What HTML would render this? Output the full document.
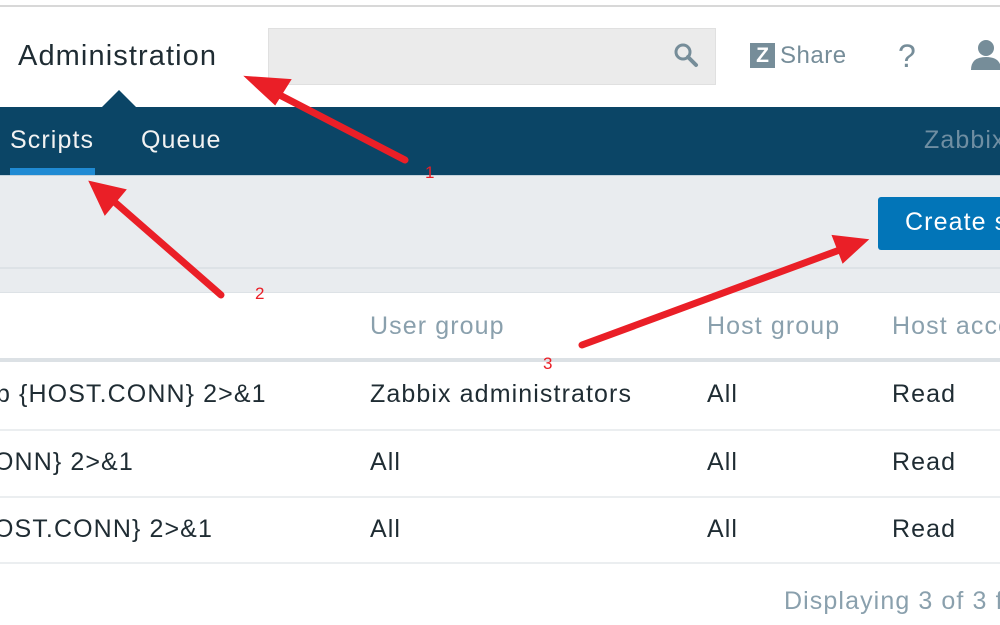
<!DOCTYPE html>
<html><head><style>
body{margin:0;width:1000px;height:625px;overflow:hidden;background:#fff;font-family:"Liberation Sans",sans-serif;position:relative;letter-spacing:1.1px}
.a{position:absolute}
</style></head><body>
<div class="a" style="left:0;top:0;width:1000px;height:5px;background:#fff;border-bottom:2px solid #d8d8d8"></div>
<div class="a" style="left:18px;top:40px;font-size:29px;color:#1f2c33">Administration</div>
<div class="a" style="left:268px;top:28px;width:446px;height:55px;background:#ebebeb;border:1px solid #e0e0e0"></div>
<svg class="a" style="left:672px;top:40px" width="30" height="30" viewBox="0 0 30 30"><circle cx="11" cy="12" r="7" fill="none" stroke="#768d99" stroke-width="3"/><line x1="16" y1="17" x2="24" y2="25" stroke="#768d99" stroke-width="4" stroke-linecap="round"/></svg>
<div class="a" style="left:750px;top:43px;width:25px;height:25px;background:#768d99;color:#fff;font-weight:bold;font-size:21px;text-align:center;line-height:25px;letter-spacing:0">Z</div>
<div class="a" style="left:780px;top:42px;font-size:24px;color:#768d99;letter-spacing:0.5px">Share</div>
<div class="a" style="left:898px;top:38px;font-size:32px;color:#768d99">?</div>
<svg class="a" style="left:968px;top:38px" width="32" height="34"><circle cx="18" cy="10" r="8" fill="#768d99"/><path d="M3 32 Q3 19 18 19 Q33 19 33 32Z" fill="#768d99"/></svg>
<div class="a" style="left:0;top:107px;width:1000px;height:68px;background:#0b4566"></div>
<div class="a" style="left:102px;top:90px;width:0;height:0;border-left:17px solid transparent;border-right:17px solid transparent;border-bottom:17px solid #0b4566"></div>
<div class="a" style="left:10px;top:126px;font-size:25px;color:#f2f2f2">Scripts</div>
<div class="a" style="left:141px;top:126px;font-size:25px;color:#f2f2f2">Queue</div>
<div class="a" style="left:924px;top:126px;font-size:25px;color:#6f8ea2">Zabbix</div>
<div class="a" style="left:10px;top:168px;width:85px;height:7px;background:#1f8ad3"></div>
<div class="a" style="left:0;top:175px;width:1000px;height:117px;background:#e9ecef;border-top:1px solid #c4d2db"></div>
<div class="a" style="left:0;top:267px;width:1000px;height:2px;background:#dde2e6"></div>
<div class="a" style="left:878px;top:197px;width:130px;height:53px;background:#0275b8;border-radius:3px"></div>
<div class="a" style="left:905px;top:208px;font-size:25px;color:#fff;white-space:nowrap">Create script</div>
<div class="a" style="left:0;top:292px;width:1000px;height:1px;background:#dde2e6"></div>
<div class="a" style="left:370px;top:312px;font-size:25px;color:#8aa0ad">User group</div>
<div class="a" style="left:707px;top:312px;font-size:25px;color:#8aa0ad">Host group</div>
<div class="a" style="left:892px;top:312px;font-size:25px;color:#8aa0ad;white-space:nowrap">Host access</div>
<div class="a" style="left:0;top:358px;width:1000px;height:4px;background:#dce1e5"></div>
<div class="a" style="left:0;top:429px;width:1000px;height:2px;background:#ebeef0"></div>
<div class="a" style="left:0;top:496px;width:1000px;height:2px;background:#ebeef0"></div>
<div class="a" style="left:0;top:562px;width:1000px;height:2px;background:#ebeef0"></div>
<div style="font-size:25px;color:#1f2c33">
<div class="a" style="left:-4px;top:380px;white-space:nowrap">p {HOST.CONN} 2&gt;&amp;1</div>
<div class="a" style="left:370px;top:380px">Zabbix administrators</div>
<div class="a" style="left:707px;top:380px">All</div><div class="a" style="left:892px;top:380px">Read</div>
<div class="a" style="left:-6px;top:448px;white-space:nowrap">ONN} 2&gt;&amp;1</div>
<div class="a" style="left:370px;top:448px">All</div><div class="a" style="left:707px;top:448px">All</div><div class="a" style="left:892px;top:448px">Read</div>
<div class="a" style="left:-6px;top:515px;white-space:nowrap">OST.CONN} 2&gt;&amp;1</div>
<div class="a" style="left:370px;top:515px">All</div><div class="a" style="left:707px;top:515px">All</div><div class="a" style="left:892px;top:515px">Read</div>
</div>
<div class="a" style="left:784px;top:587px;font-size:25px;color:#8aa0ad;white-space:nowrap">Displaying 3 of 3 found</div>
<svg class="a" style="left:0;top:0" width="1000" height="625">
<g stroke="#ea1f27" stroke-width="7" stroke-linecap="round" fill="#ea1f27">
<line x1="405" y1="160" x2="270" y2="90"/><polygon points="246,77 290,80 275,104" stroke-width="2"/>
<line x1="221" y1="295" x2="110" y2="198"/><polygon points="90,182 125,190 105,214" stroke-width="2"/>
<line x1="582" y1="345" x2="845" y2="248"/><polygon points="867,240 833,236 843,262" stroke-width="2"/>
</g>
<g fill="#ea1f27" font-family="Liberation Sans" font-size="17"><text x="425" y="178">1</text><text x="255" y="299">2</text><text x="543" y="369">3</text></g>
</svg>
</body></html>
